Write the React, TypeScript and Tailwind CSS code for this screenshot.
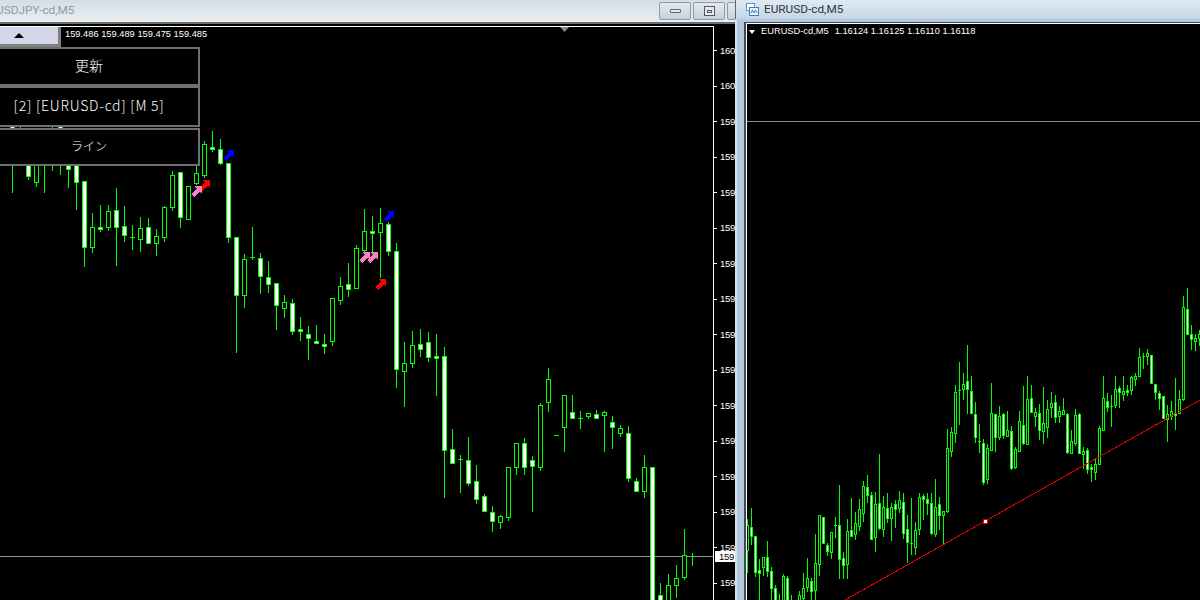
type Candle = [number, number, number, number, number] | null;

// [wickTop, wickBottom, bodyTop, bodyBottom, kind] kind: 0 hollow, 1 white, 2 cross
const leftCandles: Candle[] = [
  null,
  [120, 193, 120, 130, 1],
  [120, 130, 120, 130, 2],
  [160, 180, 160, 176, 1],
  [160, 187, 160, 182, 0],
  [160, 193, 160, 160, 2],
  [120, 171, 120, 120, 2],
  [120, 175, 120, 130, 1],
  [160, 188, 160, 169, 1],
  [160, 210, 160, 182, 1],
  [181, 267, 181, 247, 1],
  [213, 253, 227, 247, 0],
  [205, 232, 227, 229, 1],
  [205, 231, 211, 227, 0],
  [188, 266, 210, 227, 1],
  [206, 242, 226, 235, 1],
  [225, 250, 237, 238, 2],
  [217, 252, 228, 239, 0],
  [218, 244, 227, 243, 1],
  [229, 256, 236, 243, 0],
  [206, 242, 207, 237, 0],
  [171, 211, 175, 207, 0],
  [172, 228, 172, 217, 1],
  [186, 219, 186, 219, 0],
  [166, 185, 173, 183, 0],
  [141, 178, 144, 175, 0],
  [131, 152, 147, 149, 1],
  [139, 165, 149, 163, 1],
  [163, 243, 163, 237, 1],
  [237, 353, 237, 295, 1],
  [254, 308, 259, 295, 0],
  [227, 260, 257, 258, 2],
  [253, 294, 258, 276, 1],
  [261, 293, 277, 284, 1],
  [283, 330, 283, 305, 1],
  [295, 318, 302, 308, 0],
  [299, 335, 303, 331, 1],
  [317, 341, 329, 331, 1],
  [326, 360, 334, 338, 1],
  [325, 344, 341, 342, 1],
  [334, 354, 344, 346, 1],
  [298, 346, 298, 341, 0],
  [277, 305, 286, 300, 0],
  [263, 297, 284, 289, 1],
  [245, 288, 248, 288, 0],
  [209, 252, 231, 250, 0],
  [216, 256, 231, 233, 1],
  [208, 278, 223, 232, 0],
  [222, 256, 224, 251, 1],
  [243, 388, 251, 369, 1],
  [342, 407, 363, 371, 0],
  [331, 368, 345, 363, 0],
  [329, 357, 344, 349, 1],
  [332, 362, 342, 357, 1],
  [334, 396, 356, 358, 1],
  [347, 498, 356, 450, 1],
  [429, 464, 449, 463, 1],
  [455, 493, 459, 459, 2],
  [437, 486, 460, 483, 1],
  [465, 504, 481, 499, 1],
  [494, 511, 496, 511, 1],
  [506, 532, 512, 521, 1],
  [515, 529, 516, 522, 0],
  [467, 521, 467, 517, 0],
  [443, 475, 443, 467, 0],
  [438, 475, 443, 467, 1],
  [456, 512, 460, 466, 1],
  [403, 471, 405, 467, 0],
  [368, 412, 379, 402, 0],
  [435, 435, 435, 435, 2],
  [395, 452, 395, 427, 0],
  [395, 418, 412, 418, 1],
  [411, 429, 418, 418, 2],
  [413, 419, 413, 416, 0],
  [410, 418, 414, 418, 1],
  [411, 452, 412, 415, 0],
  [416, 449, 422, 427, 1],
  [425, 437, 428, 433, 0],
  [426, 482, 433, 478, 1],
  [478, 491, 481, 491, 1],
  [455, 498, 467, 491, 0],
  [467, 600, 467, 600, 1],
  [583, 600, 595, 601, 1],
  [574, 600, 585, 601, 0],
  [565, 598, 578, 585, 0],
  [529, 580, 555, 577, 0],
  [553, 566, 556, 556, 2],
];

const rightCandles: Candle[] = [
  [519, 573, 525, 550, 0],
  [508, 545, 527, 536, 1],
  [536, 577, 536, 572, 1],
  [559, 600, 570, 573, 1],
  [557, 576, 557, 567, 0],
  [541, 577, 557, 571, 1],
  [567, 600, 571, 588, 1],
  [585, 600, 588, 601, 1],
  [594, 600, 600, 600, 2],
  [574, 600, 576, 601, 0],
  [576, 600, 578, 601, 1],
  [595, 600, 600, 600, 2],
  null,
  [591, 600, 595, 601, 0],
  [573, 600, 588, 598, 0],
  [558, 592, 578, 587, 0],
  [578, 600, 581, 591, 1],
  [534, 600, 563, 590, 0],
  [515, 576, 515, 564, 0],
  [517, 543, 517, 543, 1],
  [543, 556, 545, 551, 1],
  [532, 559, 532, 552, 0],
  [517, 538, 525, 525, 2],
  [485, 579, 525, 559, 1],
  [552, 579, 558, 565, 1],
  [519, 579, 531, 564, 0],
  [498, 537, 530, 536, 1],
  [512, 540, 523, 534, 0],
  [499, 531, 509, 526, 0],
  [481, 522, 486, 513, 0],
  [475, 503, 487, 495, 1],
  [492, 540, 495, 539, 1],
  [492, 552, 504, 537, 0],
  [454, 530, 503, 528, 1],
  [496, 537, 507, 529, 0],
  [493, 523, 508, 518, 1],
  [503, 541, 507, 518, 0],
  [500, 528, 504, 509, 1],
  [491, 513, 500, 508, 0],
  [493, 539, 502, 533, 1],
  [515, 563, 529, 542, 1],
  [498, 555, 543, 543, 2],
  [522, 555, 530, 547, 0],
  [493, 535, 497, 529, 0],
  [494, 520, 496, 499, 1],
  [493, 515, 499, 503, 1],
  [493, 535, 503, 533, 1],
  [479, 537, 507, 534, 0],
  [497, 530, 504, 515, 1],
  [511, 544, 511, 515, 0],
  [429, 513, 448, 511, 0],
  [427, 457, 432, 451, 0],
  [385, 443, 392, 433, 0],
  [362, 425, 390, 390, 2],
  [373, 400, 384, 389, 0],
  [345, 414, 381, 389, 1],
  [376, 414, 391, 413, 1],
  [402, 443, 414, 437, 1],
  [424, 453, 441, 441, 2],
  [439, 485, 443, 482, 1],
  [444, 484, 448, 479, 0],
  [383, 450, 413, 450, 0],
  [414, 452, 414, 437, 1],
  [406, 440, 416, 437, 0],
  [413, 439, 414, 435, 1],
  [411, 437, 430, 436, 0],
  [426, 470, 431, 468, 1],
  [447, 469, 449, 467, 0],
  [411, 451, 421, 451, 0],
  [386, 445, 425, 443, 1],
  [376, 444, 399, 444, 0],
  [385, 413, 398, 412, 1],
  [408, 427, 412, 416, 0],
  [404, 440, 413, 430, 1],
  [387, 444, 423, 431, 0],
  [400, 438, 409, 427, 0],
  [392, 418, 403, 407, 0],
  [395, 423, 402, 417, 1],
  [406, 423, 411, 416, 0],
  [398, 414, 410, 414, 0],
  [413, 454, 414, 452, 1],
  [430, 454, 441, 453, 0],
  [409, 446, 415, 443, 0],
  [413, 453, 414, 453, 1],
  [447, 469, 451, 454, 0],
  [448, 474, 450, 469, 1],
  [464, 482, 467, 469, 1],
  [458, 480, 464, 472, 0],
  [426, 465, 428, 464, 0],
  [376, 430, 398, 430, 0],
  [393, 412, 401, 407, 1],
  [395, 427, 406, 406, 2],
  [376, 408, 389, 405, 0],
  [386, 408, 388, 392, 1],
  [376, 401, 391, 394, 0],
  [385, 396, 390, 392, 1],
  [376, 395, 377, 390, 0],
  [373, 386, 376, 379, 0],
  [348, 376, 357, 376, 0],
  [353, 369, 356, 356, 2],
  [349, 365, 353, 356, 0],
  [355, 384, 355, 383, 1],
  [384, 400, 384, 392, 1],
  [391, 410, 393, 398, 1],
  [396, 419, 396, 418, 1],
  [405, 442, 414, 419, 0],
  [401, 420, 411, 416, 0],
  [378, 430, 413, 415, 1],
  [390, 414, 399, 413, 0],
  [296, 401, 307, 399, 0],
  [288, 335, 309, 334, 1],
  [325, 350, 334, 339, 1],
  [334, 351, 338, 341, 0],
  [330, 346, 334, 338, 0],
];

const GREEN = "#00ff00";

function Candles({ data, start, step, half }: { data: Candle[]; start: number; step: number; half: number }) {
  return (
    <g shapeRendering="crispEdges">
      {data.map((c, i) => {
        if (!c) return null;
        const [wt, wb, bt, bb, kind] = c;
        const x = start + step * i;
        return (
          <g key={i}>
            <rect x={x} y={wt} width={1} height={Math.max(wb - wt, 1)} fill={GREEN} />
            {kind === 2 ? (
              <rect x={x - half} y={bt} width={half * 2 + 1} height={1} fill={GREEN} />
            ) : (
              <>
                <rect x={x - half} y={bt} width={half * 2 + 1} height={Math.max(bb - bt, 2) + 1} fill={GREEN} />
                <rect
                  x={x - half + 1}
                  y={bt + 1}
                  width={half * 2 - 1}
                  height={Math.max(bb - bt - 1, 1)}
                  fill={kind === 1 ? "#ffffff" : "#000000"}
                />
              </>
            )}
          </g>
        );
      })}
    </g>
  );
}

function Arrow({ x, y, color, shadow }: { x: number; y: number; color: string; shadow?: string }) {
  const d = "M3 0H11V8L8.5 5.5L3 11L0 8L5.5 2.5Z";
  return (
    <g transform={`translate(${x} ${y})`} shapeRendering="crispEdges">
      {shadow && <path d={d} fill={shadow} transform="translate(-1 1)" />}
      <path d={d} fill={color} />
    </g>
  );
}

const axisLabels = ["160", "160", "159", "159", "159", "159", "159", "159", "159", "159", "159", "159", "159", "159", "159", "159"];

function TitleButton({ children }: { children?: React.ReactNode }) {
  return (
    <div className="flex h-[18px] w-[32px] shrink-0 items-center justify-center rounded-[2px] border border-[#8e9ba8] bg-gradient-to-b from-[#e4e9ed] to-[#c8d0d8]">
      {children}
    </div>
  );
}

function MenuRow({ label, className }: { label: string; className: string }) {
  return (
    <div
      className={`flex items-center justify-center border-y-2 border-r-2 border-y-[#707070] border-r-[#707070] bg-black font-light text-white ${className}`}
    >
      {label}
    </div>
  );
}

function LeftWindow() {
  return (
    <div className="flex h-full w-[735px] shrink-0 flex-col bg-[#c9dbee]">
      <div className="flex h-[22px] shrink-0 items-center justify-between overflow-hidden bg-gradient-to-b from-[#d3dee6] to-[#e9eef1]">
        <span className="-ml-[4px] whitespace-nowrap font-['Roboto'] text-[11.8px] text-[#8d9aa6]">USDJPY-cd,M5</span>
        <div className="-mr-[24px] flex items-center gap-[2px]">
          <TitleButton>
            <div className="h-[4px] w-[11px] rounded-[1px] border border-[#5f6a75] bg-[#e8e8e8]" />
          </TitleButton>
          <TitleButton>
            <div className="flex h-[10px] w-[11px] items-center justify-center border border-[#4f5a65] bg-[#e8e8e8]">
              <div className="h-[3px] w-[5px] border border-[#4f5a65]" />
            </div>
          </TitleButton>
          <TitleButton />
        </div>
      </div>
      <div className="h-[2px] shrink-0 bg-[#6d6d6d]" />
      <div className="h-[2px] shrink-0 bg-black" />
      <div className="flex min-h-0 flex-1 bg-black">
        <div className="relative w-[714px] shrink-0 overflow-hidden border-t border-r border-white">
          <svg className="block" width={713} height={573} viewBox="0 27 713 573">
            <line x1={0} y1={556.5} x2={713} y2={556.5} stroke="#8596a5" strokeWidth={1} shapeRendering="crispEdges" />
            <Candles data={leftCandles} start={4} step={8} half={2} />
            <Arrow x={199} y={180} color="#ff0000" />
            <Arrow x={191} y={186} color="#ff80b4" shadow="#1a1a90" />
            <Arrow x={223} y={150} color="#0000ff" />
            <Arrow x={383} y={211} color="#0000ff" />
            <Arrow x={359} y={252} color="#ff80b4" shadow="#1a1a90" />
            <Arrow x={367} y={252} color="#ff80b4" shadow="#1a1a90" />
            <Arrow x={375} y={279} color="#ff0000" />
            <path d="M560 0H569L564.5 5Z" fill="#8a8a8a" transform="translate(0 27)" />
          </svg>
          <div className="absolute -left-[20px] top-0 flex h-[20px] w-[81px] items-center justify-center border-r-[3px] border-b-[3px] border-[#808080] bg-[#d5d5e8]">
            <div className="h-0 w-0 border-x-[5px] border-b-[5px] border-x-transparent border-b-black" />
          </div>
          <span className="absolute left-[65px] top-[1px] whitespace-nowrap text-[9.3px] leading-[13px] text-white">
            159.486 159.489 159.475 159.485
          </span>
          <div className="absolute -left-[20px] top-[20px] flex w-[220px] flex-col font-['Noto_Sans_CJK_JP']">
            <MenuRow label="更新" className="h-[39px] pb-[2px] text-[14px]" />
            <MenuRow label="[2] [EURUSD-cd] [M 5]" className="h-[41px] pb-[2px] text-[14px] tracking-[0.75px]" />
            <div className="h-px" />
            <MenuRow label="ライン" className="h-[38px] pb-[2px] text-[12px]" />
          </div>
        </div>
        <div className="relative flex w-[21px] shrink-0 flex-col overflow-hidden pt-[7px]">
          {axisLabels.map((label, i) => (
            <div key={i} className="flex h-[35.5px] shrink-0 items-center gap-[3px] text-[9.5px] tracking-[-0.3px] text-white">
              <div className="h-px w-[3px] shrink-0 bg-white" />
              <span>{label}</span>
            </div>
          ))}
          <span className="absolute left-[1px] top-[525px] h-[11px] w-[20px] bg-white pl-[4px] text-[9.5px] leading-[11px] tracking-[-0.3px] text-black">
            159
          </span>
        </div>
      </div>
    </div>
  );
}

function RightWindow() {
  return (
    <div className="flex h-full min-w-0 flex-1 flex-col bg-[#b4c9dd]">
      <div className="flex h-[19px] shrink-0 items-center gap-[5px] border-l border-l-[#5d6770] bg-gradient-to-b from-[#dfe9f2] to-[#c6d6e6] pl-[10px]">
        <svg width={13} height={13} viewBox="0 0 13 13" className="shrink-0">
          <rect x={0.5} y={0.5} width={8} height={7} fill="#ffffff" stroke="#5b93cc" />
          <rect x={3.5} y={4.5} width={9} height={8} fill="#eaf3fb" stroke="#3f7fc0" />
          <path d="M5 10L6.5 7L8 10L9.5 7L11 10" fill="none" stroke="#3f7fc0" />
        </svg>
        <span className="whitespace-nowrap font-['Roboto'] text-[11.8px] text-[#2e3740]">EURUSD-cd,M5</span>
      </div>
      <div className="flex min-h-0 flex-1 border-l-2 border-l-[#d3e2f1] pl-[7px] pt-[3px]">
        <div className="min-w-0 flex-1 border-t border-l-2 border-[#3f4a54]">
          <div className="relative h-full overflow-hidden border-t border-l border-white bg-black">
            <svg className="block" width={453} height={576} viewBox="747 24 453 576">
              <line x1={747} y1={121.5} x2={1200} y2={121.5} stroke="#8c8c8c" strokeWidth={1} shapeRendering="crispEdges" />
              <Candles data={rightCandles} start={747} step={4} half={1} />
              <line x1={845} y1={600} x2={1200} y2={400} stroke="#e60000" strokeWidth={1} shapeRendering="crispEdges" />
              <rect x={983} y={519} width={5} height={5} fill="#e60000" shapeRendering="crispEdges" />
              <rect x={984} y={520} width={3} height={3} fill="#ffffff" shapeRendering="crispEdges" />
            </svg>
            <div className="absolute left-[2px] top-[1px] flex items-center whitespace-nowrap text-[9.3px] leading-[13px] text-white">
              <div className="mr-[6px] h-0 w-0 border-x-[3.5px] border-t-[4px] border-x-transparent border-t-white" />
              <span>EURUSD-cd,M5</span>
              <span className="ml-[6px]">1.16124 1.16125 1.16110 1.16118</span>
            </div>
          </div>
        </div>
      </div>
    </div>
  );
}

export default function App() {
  return (
    <div
      className="flex h-[600px] w-[1200px] overflow-hidden bg-black"
      style={{ fontFamily: '"Liberation Sans", "Noto Sans CJK JP", sans-serif' }}
    >
      <LeftWindow />
      <RightWindow />
    </div>
  );
}
